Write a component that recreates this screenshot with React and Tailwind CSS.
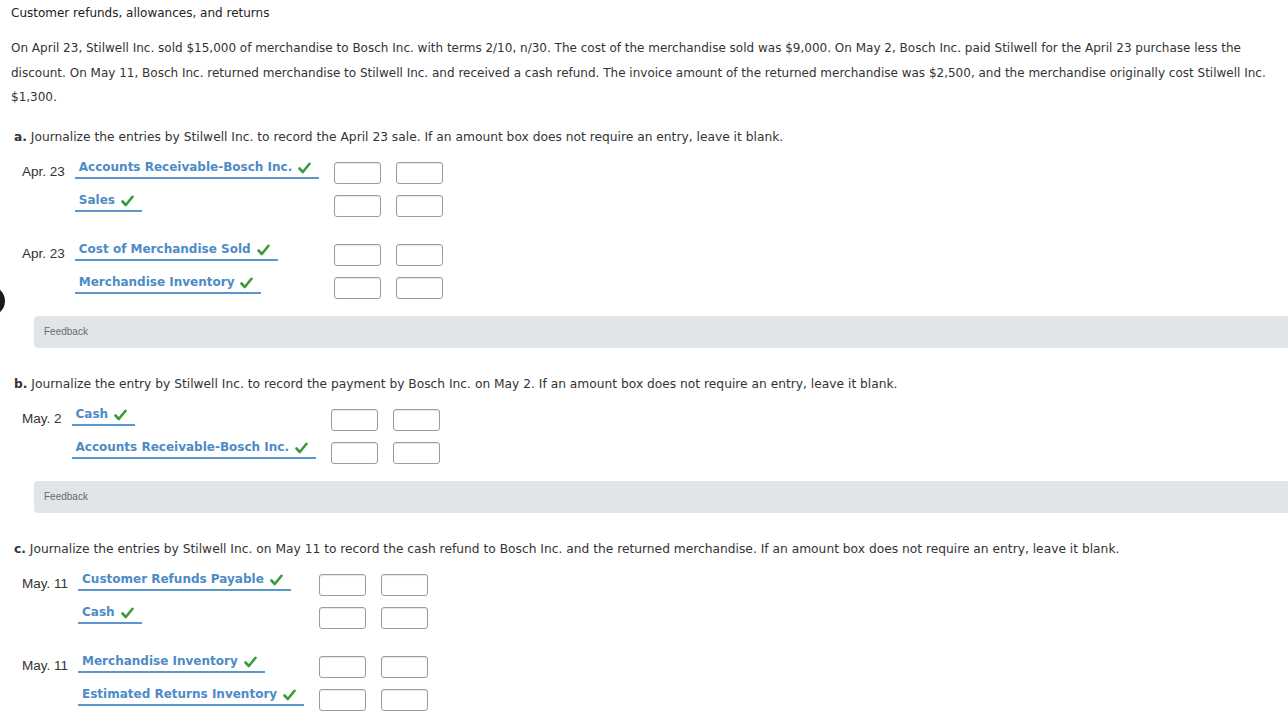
const font = "font-['DejaVu_Sans',Verdana,sans-serif]";

function Check() {
    return (
        <svg width="13" height="12" viewBox="0 0 13 12" className="inline-block ml-[6px] -mb-[1px]">
            <path d="M1.5 6.5 L4.8 10 L11.5 1.8" fill="none" stroke="#3b9a3b" strokeWidth="2.6" strokeLinecap="round" strokeLinejoin="round" />
        </svg>
    );
}

function Box() {
    return <div className="w-[47px] h-[22px] border border-[#9c9c9c] rounded-[3px] bg-white shadow-[inset_0_1px_1px_rgba(0,0,0,0.1)]"></div>;
}

function Row({ date, account, first, spaced }) {
    const top = spaced ? "pt-[16px] h-[49px]" : "h-[33px]";
    return (
        <>
            <div className={`${top} pr-[10px]`}>
                <div className="pt-[7px] text-[13.5px] leading-[16px] text-[#333] font-['Liberation_Sans',Arial,sans-serif]">{first ? date : ""}</div>
            </div>
            <div className={`${top} justify-self-start`}>
                <div className="mt-[2px] pl-[4px] pr-[8px] pb-[2px] border-b-2 border-[#5b97cc] text-[12px] leading-[16px] font-bold text-[#4d8bc6] whitespace-nowrap">
                    {account}
                    <Check />
                </div>
            </div>
            <div className={`${top} pl-[15px]`}>
                <div className="mt-[5px]"><Box /></div>
            </div>
            <div className={`${top} pl-[15px]`}>
                <div className="mt-[5px]"><Box /></div>
            </div>
        </>
    );
}

function Journal({ rows }) {
    return (
        <div className="ml-[22px] mt-[12px] grid grid-cols-[auto_auto_auto_auto] w-max">
            {rows.map((r, i) => (
                <Row key={i} {...r} />
            ))}
        </div>
    );
}

function Heading({ letter, children, className }) {
    return (
        <p className={`ml-[14px] text-[12.25px] leading-[16px] text-[#333] ${className}`}>
            <span className="font-bold">{letter}</span> {children}
        </p>
    );
}

function Feedback() {
    return (
        <div className="ml-[34px] mt-[11px] w-[1270px] h-[32px] rounded-[4px] bg-[#dfe5e8] flex items-center pl-[10px]">
            <span className="text-[10px] text-[#6b6b6b] font-['Liberation_Sans',Arial,sans-serif]">Feedback</span>
        </div>
    );
}

export default function App() {
    return (
        <div className={`relative w-[1288px] h-[722px] overflow-hidden bg-white ${font}`}>
            <div className="absolute left-[-25px] top-[286px] w-[30px] h-[30px] rounded-full bg-[#1a1a1a]"></div>
            <p className="pl-[11px] pt-[5px] text-[12px] leading-[16px] text-[#222]">Customer refunds, allowances, and returns</p>
            <p className="pl-[11px] pr-[10px] mt-[15px] text-[12px] leading-[24.5px] text-[#333]">
                On April 23, Stilwell Inc. sold $15,000 of merchandise to Bosch Inc. with terms 2/10, n/30. The cost of the merchandise sold was $9,000. On May 2, Bosch Inc. paid Stilwell for the April 23 purchase less the discount. On May 11, Bosch Inc. returned merchandise to Stilwell Inc. and received a cash refund. The invoice amount of the returned merchandise was $2,500, and the merchandise originally cost Stilwell Inc. $1,300.
            </p>

            <Heading letter="a." className="mt-[19px]">
                Journalize the entries by Stilwell Inc. to record the April 23 sale. If an amount box does not require an entry, leave it blank.
            </Heading>
            <Journal
                rows={[
                    { date: "Apr. 23", account: "Accounts Receivable-Bosch Inc.", first: true },
                    { account: "Sales" },
                    { date: "Apr. 23", account: "Cost of Merchandise Sold", first: true, spaced: true },
                    { account: "Merchandise Inventory" },
                ]}
            />
            <Feedback />

            <Heading letter="b." className="mt-[28px]">
                Journalize the entry by Stilwell Inc. to record the payment by Bosch Inc. on May 2. If an amount box does not require an entry, leave it blank.
            </Heading>
            <Journal
                rows={[
                    { date: "May. 2", account: "Cash", first: true },
                    { account: "Accounts Receivable-Bosch Inc." },
                ]}
            />
            <Feedback />

            <Heading letter="c." className="mt-[28px]">
                Journalize the entries by Stilwell Inc. on May 11 to record the cash refund to Bosch Inc. and the returned merchandise. If an amount box does not require an entry, leave it blank.
            </Heading>
            <Journal
                rows={[
                    { date: "May. 11", account: "Customer Refunds Payable", first: true },
                    { account: "Cash" },
                    { date: "May. 11", account: "Merchandise Inventory", first: true, spaced: true },
                    { account: "Estimated Returns Inventory" },
                ]}
            />
        </div>
    );
}
